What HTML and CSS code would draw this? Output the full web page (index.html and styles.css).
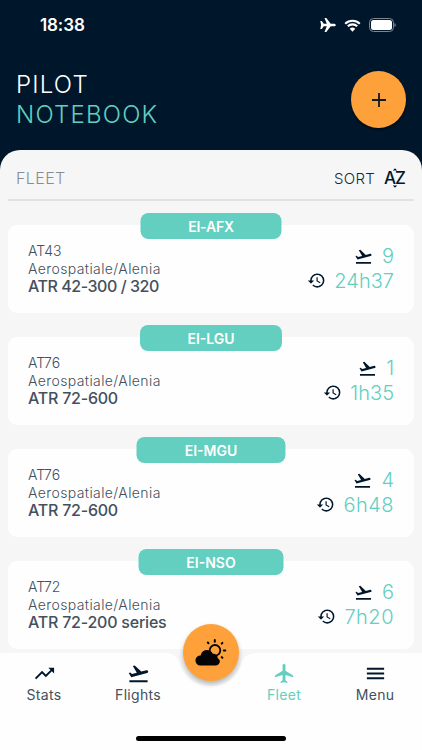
FILE: index.html
```html
<!DOCTYPE html>
<html lang="en">
<head>
<meta charset="utf-8">
<title>Pilot Notebook</title>
<link rel="stylesheet" href="styles.css">
</head>
<body>
<svg class="defs" width="0" height="0">
  <symbol id="takeoff" viewBox="0 0 24 24"><path d="M2.5 19h19v2h-19zM22.07 9.64c-.21-.8-1.04-1.28-1.84-1.06L14.92 10l-6.9-6.43-1.93.51 4.14 7.17-4.97 1.33-1.97-1.54-1.45.39 2.59 4.49L21 11.49c.81-.23 1.28-1.05 1.07-1.85z"/></symbol>
  <symbol id="history" viewBox="0 0 24 24"><path d="M13 3a9 9 0 0 0-9 9H1l3.89 3.89.07.14L9 12H6c0-3.87 3.13-7 7-7s7 3.13 7 7-3.13 7-7 7c-1.93 0-3.68-.79-4.94-2.06l-1.42 1.42A8.95 8.95 0 0 0 13 21a9 9 0 0 0 0-18zm-1 5v5l4.28 2.54.72-1.21-3.5-2.08V8H12z"/></symbol>
  <symbol id="plane" viewBox="0 0 24 24"><path d="M21 16v-2l-8-5V3.500a1.500 1.500 0 0 0-3 0V9l-8 5v2l8-2.500V19l-2 1.500V22l3.500-1 3.500 1v-1.500L13 19v-5.500z"/></symbol>
</svg>
<main class="app">
  <div class="status">
    <span class="time">18:38</span>
    <span class="signals">
      <svg class="airplane" viewBox="0 0 16 14"><path d="M.3 2.900h1.500l2 2.800h3L4.500 0h1.800l4.400 5.700h3.100c1.200 0 2 .6 2 1.300s-.8 1.300-2 1.300h-3.100L6.300 14H4.500l2.300-5.700h-3l-2 2.800H.3L1.100 7z"/></svg>
      <svg class="wifi" viewBox="0 0 17 13"><path d="M1.200 4.700a10.500 10.500 0 0 1 14.600 0M3.800 7.300a6.800 6.800 0 0 1 9.400 0" fill="none" stroke="#fff" stroke-width="2.100"/><path d="M5.700 9.800a4 4 0 0 1 5.600 0L8.500 12.700z"/></svg>
      <svg class="battery" viewBox="0 0 27 14"><rect x=".5" y=".5" width="24" height="13" rx="4" fill="none" stroke="#7d8791"/><rect x="2" y="2" width="21" height="10" rx="2.500"/><path d="M25.500 5q1.300.5 1.300 2t-1.300 2z" fill="#7d8791"/></svg>
    </span>
  </div>
  <header class="header">
    <h1><span class="pilot">PILOT</span><span class="notebook">NOTEBOOK</span></h1>
    <button class="add" aria-label="Add"><svg viewBox="0 0 14 14"><path d="M7 0v14M0 7h14" stroke="#111820" stroke-width="1.800"/></svg></button>
  </header>
  <section class="panel">
    <div class="toolbar">
      <span class="heading">FLEET</span>
      <span class="sort">SORT</span>
      <span class="az">AZ<svg viewBox="0 0 6 20"><path d="M.8 2.500 3 .2l2.200 2.300zM.8 17.500 3 19.800l2.200-2.300z"/></svg></span>
    </div>
    <article class="card">
      <b class="tag t1">EI-AFX</b>
      <div class="model"><span>AT43</span><span class="maker">Aerospatiale/Alenia</span><strong class="long">ATR 42-300 / 320</strong></div>
      <div class="stats"><span><svg><use href="#takeoff"/></svg>9</span><span><svg><use href="#history"/></svg>24h37</span></div>
    </article>
    <article class="card">
      <b class="tag t2">EI-LGU</b>
      <div class="model"><span>AT76</span><span class="maker">Aerospatiale/Alenia</span><strong>ATR 72-600</strong></div>
      <div class="stats"><span><svg><use href="#takeoff"/></svg>1</span><span><svg><use href="#history"/></svg>1h35</span></div>
    </article>
    <article class="card">
      <b class="tag t3">EI-MGU</b>
      <div class="model"><span>AT76</span><span class="maker">Aerospatiale/Alenia</span><strong>ATR 72-600</strong></div>
      <div class="stats wide"><span><svg><use href="#takeoff"/></svg>4</span><span><svg><use href="#history"/></svg>6h48</span></div>
    </article>
    <article class="card">
      <b class="tag t4">EI-NSO</b>
      <div class="model"><span>AT72</span><span class="maker">Aerospatiale/Alenia</span><strong>ATR 72-200 series</strong></div>
      <div class="stats wide"><span><svg><use href="#takeoff"/></svg>6</span><span><svg><use href="#history"/></svg>7h20</span></div>
    </article>
  </section>
  <nav class="nav">
    <svg class="nav-bg" viewBox="0 0 422 97"><path d="M0 0H165C174 0 178 4 180 11C184 25 196 33 210.500 33S237 25 241 11C243 4 248 0 257 0H422V97H0z"/></svg>
    <a class="item"><svg viewBox="0 0 24 24"><path d="m16 6 2.290 2.290-4.880 4.880-4-4L2 16.590 3.410 18l6-6 4 4 6.300-6.290L22 12V6z"/></svg>Stats</a>
    <a class="item"><svg viewBox="0 0 24 24"><use href="#takeoff"/></svg>Flights</a>
    <a class="item active"><svg viewBox="0 0 24 24"><use href="#plane"/></svg>Fleet</a>
    <a class="item"><svg viewBox="0 0 24 24"><path d="M3 18h18v-2H3v2zm0-5h18v-2H3v2zm0-7v2h18V6H3z"/></svg>Menu</a>
    <button class="weather" aria-label="Weather"><svg viewBox="0 0 32 28"><circle cx="20" cy="11.300" r="5.300" fill="none" stroke="#050505" stroke-width="1.800"/><path d="M19.800 1v1.800M28.800 11.500h1.500M12.800 3.500l.7.700M26.700 4.600l.7-.7M26.700 18.100l.7.700" stroke="#050505" stroke-width="2" stroke-linecap="round"/><path d="M5.300 26.500A5 5 0 0 1 5.600 16.500C7 10 15 9.300 17.800 14.700C21 14.500 23 17 22.700 19.300C27 21.500 24 26.500 21 26.500z"/></svg></button>
    <i class="home"></i>
  </nav>
</main>
</body>
</html>
```
FILE: styles.css
```css
* { box-sizing: border-box; }
body { margin: 0; font-family: Inter, "Open Sans", sans-serif; color: #43505d; }
.defs { position: absolute; }
.app { width: 422px; height: 750px; overflow: hidden; position: relative; background: #00172b; display: flex; flex-direction: column; }
svg { fill: #00172b; display: block; }
button { border: 0; padding: 0; }
.status { height: 50px; flex: none; display: flex; justify-content: space-between; padding: 0 26px 0 40px; align-items: center; color: #fff; }
.status svg { fill: #fff; }
.time { font-size: 17px; font-weight: 600; letter-spacing: -.1px; }
.signals { display: flex; align-items: center; gap: 8px; }
.airplane { width: 16px; height: 14px; }
.wifi { width: 17px; height: 13px; }
.battery { width: 27px; height: 14px; }
.header { height: 100px; flex: none; display: flex; justify-content: space-between; align-items: flex-start; padding: 20px 16px 0; }
h1 { margin: 0; font-size: 24px; line-height: 29.500px; font-weight: 300; color: #fff; }
h1 span { display: block; letter-spacing: 1.200px; }
.notebook { color: #62cfc0; }
.add { width: 55px; height: 57px; margin-top: 1px; border-radius: 50%; background: #ffa13b; display: grid; place-items: center; box-shadow: 0 2px 3px #0007; }
.add svg { width: 14px; height: 14px; }
.panel { flex: 1; min-height: 0; background: #f6f6f6; border-radius: 20px 20px 0 0; padding: 0 8px; }
.toolbar { height: 51px; border-bottom: 2px solid #e1e2e5; display: flex; align-items: center; padding: 6px 9px 0 8px; font-size: 16px; font-weight: 300; margin-bottom: 24px; }
.heading { color: #888d94; margin-right: auto; letter-spacing: .4px; }
.sort { font-size: 15px; margin-right: 9px; margin-top: 2px; color: #142a3d; letter-spacing: .3px; }
.az { font-size: 17px; line-height: 20px; font-weight: 500; color: #00172b; position: relative; letter-spacing: -1px; }
.az svg { position: absolute; width: 6px; height: 20px; left: 8px; top: 0; }
.card { height: 88px; margin-bottom: 24px; border-radius: 9px; background: #fefefe; position: relative; display: flex; justify-content: space-between; padding: 17px 20px 0; }
.tag { position: absolute; top: -12px; left: 50%; transform: translateX(-50%); height: 26px; border-radius: 8px; background: #62cfc0; color: #fff; font-size: 14px; font-weight: 600; line-height: 27px; text-align: center; }
.t1 { width: 141px; letter-spacing: -.2px; }
.t2 { width: 142px; }
.t3 { width: 149px; }
.t4 { width: 145px; }
.model { display: flex; flex-direction: column; font-size: 14px; line-height: 17.500px; font-weight: 300; }
.maker { letter-spacing: .4px; }
.model strong { font-size: 16px; font-weight: 500; line-height: 18px; letter-spacing: -.22px; }
.model .long { letter-spacing: -.45px; }
.stats { display: flex; flex-direction: column; align-items: flex-end; font-size: 20px; line-height: 24.500px; font-weight: 300; color: #62cfc0; padding-top: 2px; }
.stats span { display: flex; align-items: center; gap: 8px; }
.stats span:first-child { gap: 9px; }
.stats svg { width: 19px; height: 19px; }
.wide span:last-child { letter-spacing: .5px; }
.nav { position: absolute; left: 0; right: 0; bottom: 0; height: 97px; display: flex; align-items: start; padding-top: 9px; }
.nav-bg { position: absolute; inset: 0; width: 422px; height: 97px; fill: #fefefe; }
.item { position: relative; width: 94px; display: flex; flex-direction: column; align-items: center; font-size: 14px; line-height: 18px; letter-spacing: .3px; }
.item:nth-of-type(1) { margin-left: -3px; }
.item:nth-of-type(3) { margin-left: 52px; }
.item:nth-of-type(4) { margin-left: -3px; }
.item svg { width: 23px; height: 23px; margin-bottom: 1px; }
.active { color: #62cfc0; }
.active svg { fill: #62cfc0; }
.weather { position: absolute; left: 183px; top: -29px; width: 56px; height: 57px; border-radius: 50%; background: #ffa13b; box-shadow: 0 3px 5px #0004; }
.weather svg { width: 32px; height: 28px; fill: #050505; margin: 0 auto; }
.home { position: absolute; left: 136px; top: 83px; width: 150px; height: 5px; border-radius: 3px; background: #000; }
```
